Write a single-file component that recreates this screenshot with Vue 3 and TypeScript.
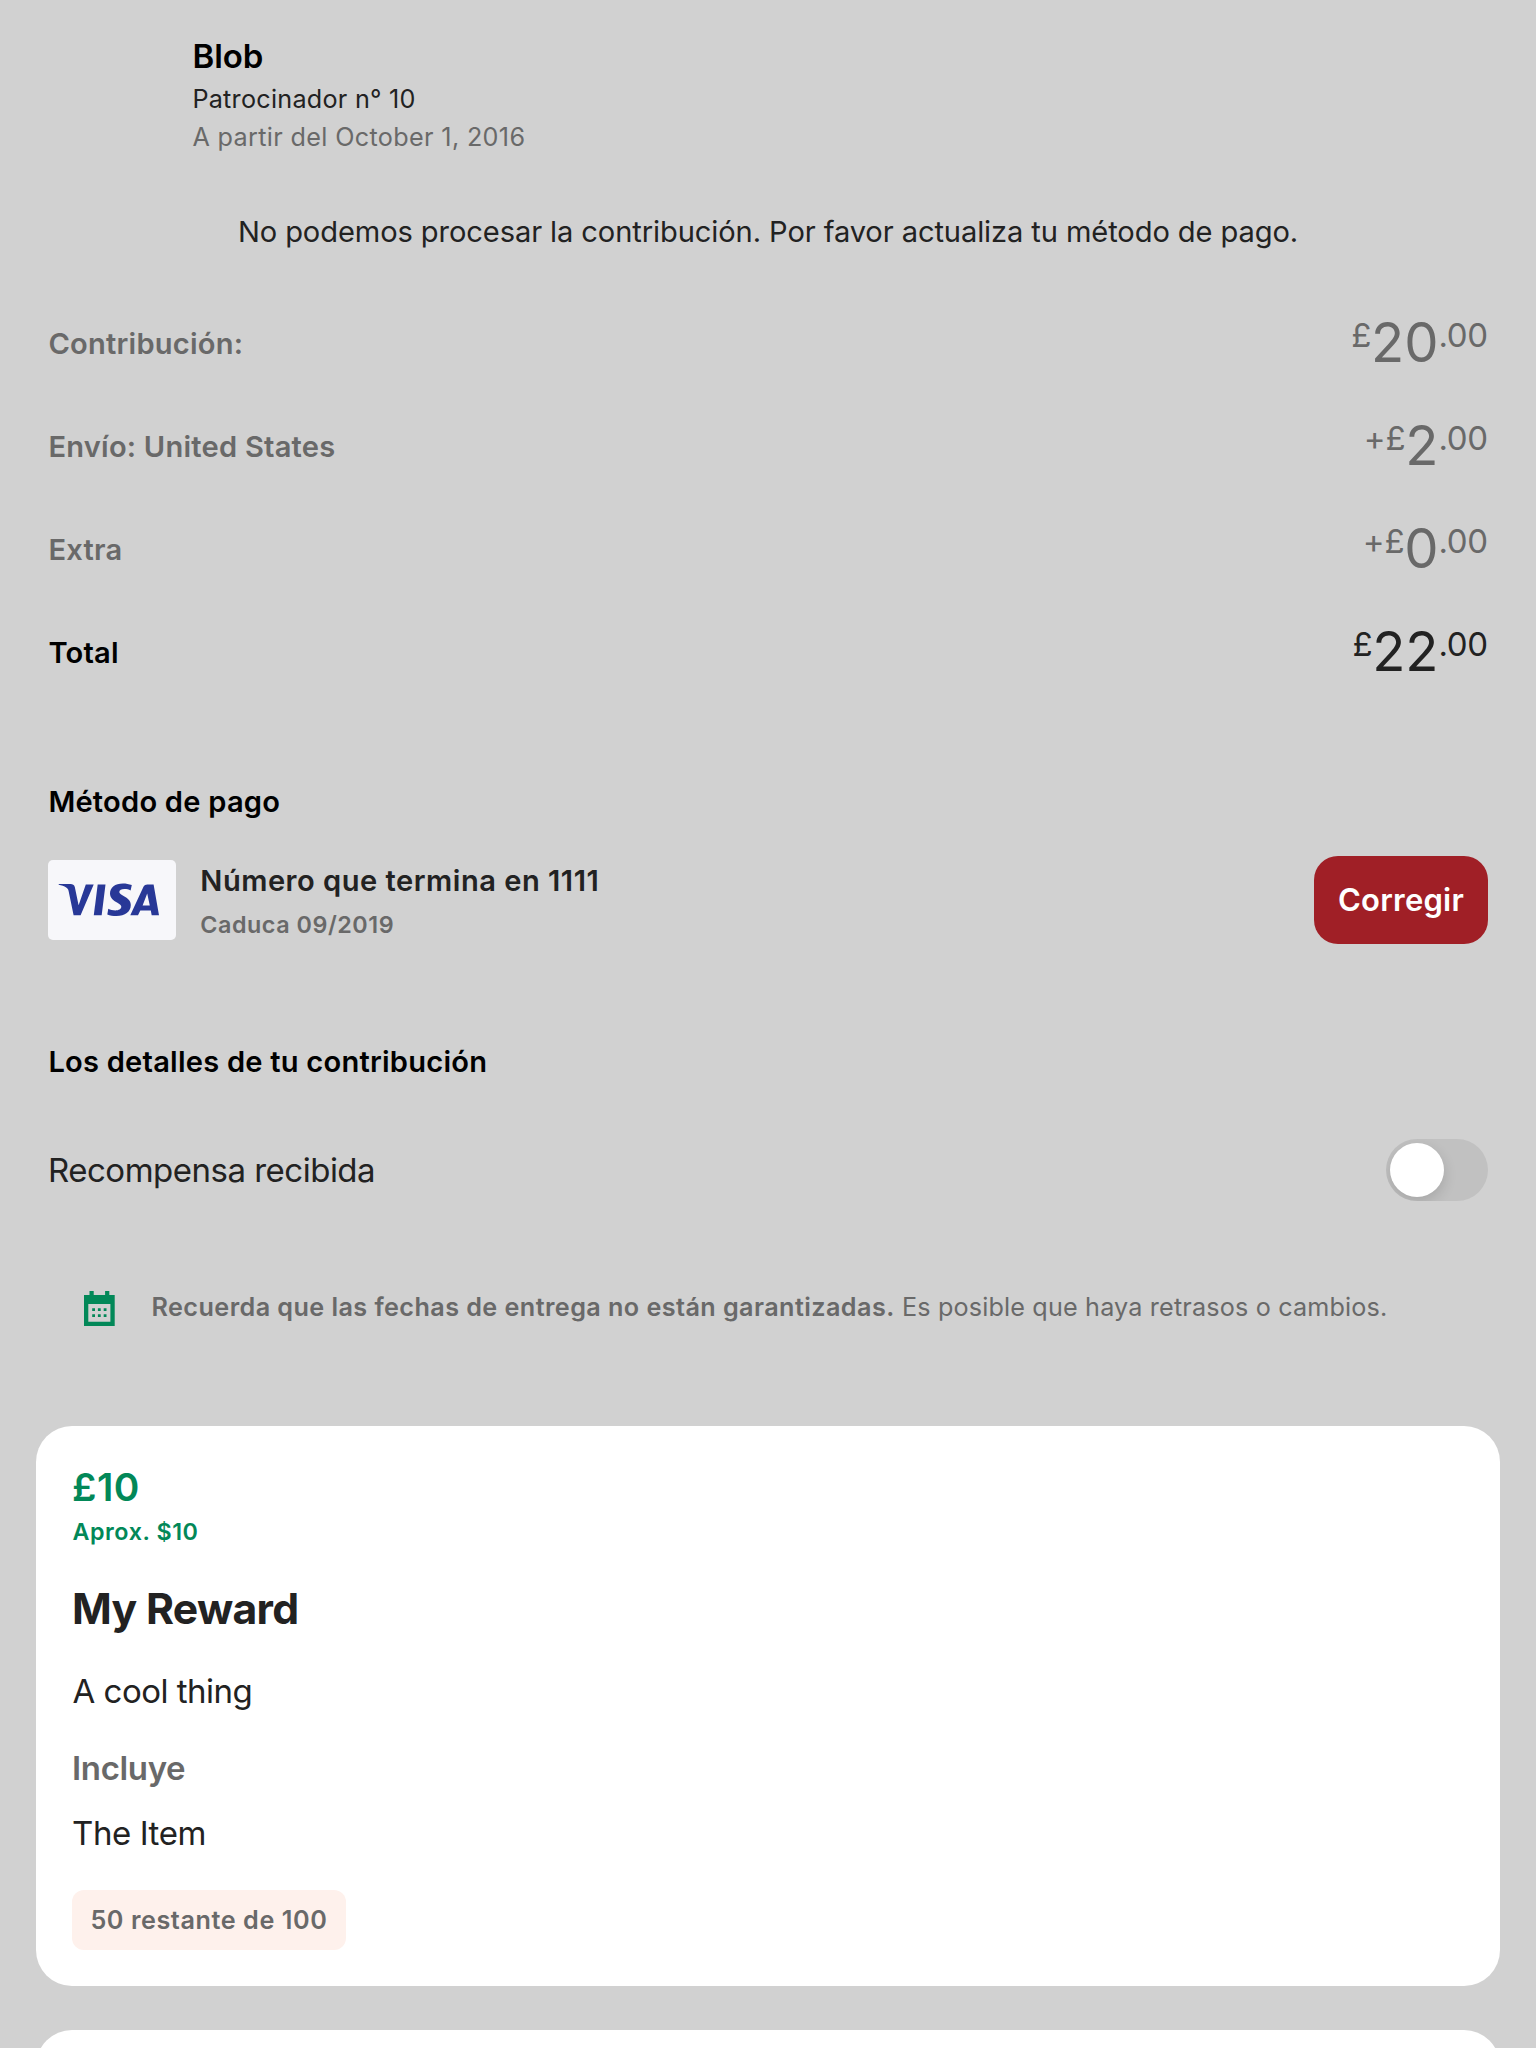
<script setup lang="ts">
import { ref } from 'vue'

interface AmountRow {
  label: string
  prefix: string
  whole: string
  cents: string
  total?: boolean
}

const amounts: AmountRow[] = [
  { label: 'Contribución:', prefix: '£', whole: '20', cents: '.00' },
  { label: 'Envío: United States', prefix: '+£', whole: '2', cents: '.00' },
  { label: 'Extra', prefix: '+£', whole: '0', cents: '.00' },
  { label: 'Total', prefix: '£', whole: '22', cents: '.00', total: true },
]

const received = ref(false)
</script>

<template>
  <main class="page">
    <header class="backer">
      <div class="name">Blob</div>
      <div class="number">Patrocinador n° 10</div>
      <div class="since">A partir del October 1, 2016</div>
    </header>

    <p class="message">No podemos procesar la contribución. Por favor actualiza tu método de pago.</p>

    <section class="amounts">
      <div v-for="row in amounts" :key="row.label" class="amount-row" :class="{ total: row.total }">
        <span class="label">{{ row.label }}</span>
        <span class="amount">
          <span class="small prefix">{{ row.prefix }}</span>
          <span class="whole">{{ row.whole }}</span>
          <span class="small cents">{{ row.cents }}</span>
        </span>
      </div>
    </section>

    <h2 class="heading method">Método de pago</h2>
    <section class="payment">
      <div class="card-logo">
        <svg viewBox="0 0 128 80" width="128" height="80" fill="#283897" aria-label="Visa">
          <path d="M10.7 24H22.6C24.6 24 26.2 24.7 26.8 27L30.6 45.2L37.8 24.4H45.7L32.6 55.3H25.6L20.6 31C20.2 29.3 19.6 28.4 18.2 27.5C16.2 26.2 13.6 25.4 10.7 24.8Z" />
          <path d="M49.7 24.4H57.5L53.7 55.3H45.8Z" />
          <path d="M83.8 25C81 23.9 78 23.4 75 23.4C67 23.4 62 27.5 62 33.5C62 38 65.5 40.5 69 42.5C72 44.2 73.3 45.2 73.3 46.8C73.3 49.3 70.5 50.4 67.5 50.4C64.5 50.4 62.5 49.8 60.3 48.8L59.3 54.5C62 55.5 65 56 68.5 56C77 56 82.8 51.8 82.8 45C82.8 40.5 79.5 38 76 36.2C73 34.6 71.3 33.6 71.3 32C71.3 30.2 73.5 29.1 76.3 29.1C78.7 29.1 80.8 29.6 82.6 30.4Z" />
          <path fill-rule="evenodd" d="M99.3 24.4H105.6L111 55.3H103.7L102.8 50.5H92.3L90 55.3H82.3L95.6 26.6C96.3 25.1 97.6 24.4 99.3 24.4ZM94.6 45.4H101.8L99.2 33.6Z" />
        </svg>
      </div>
      <div class="card-text">
        <div class="card-number">Número que termina en 1111</div>
        <div class="card-expiry">Caduca 09/2019</div>
      </div>
      <button class="fix" type="button">Corregir</button>
    </section>

    <h2 class="heading details">Los detalles de tu contribución</h2>
    <section class="received">
      <span class="received-label">Recompensa recibida</span>
      <span class="toggle" role="switch" :aria-checked="received" @click="received = !received">
        <span class="knob"></span>
      </span>
    </section>

    <section class="note">
      <svg viewBox="0 0 32 36" width="32" height="36" fill="#028858">
        <path fill-rule="evenodd" d="M5.5 0H9.7V4H21.1V0H25.3V4H30.7V35H0V4H5.5ZM4.3 13V30.8H26.4V13Z" />
        <path d="M8.2 17.2h2.8v2.8h-2.8zM13.9 17.2h2.8v2.8h-2.8zM19.7 17.2h2.8v2.8h-2.8zM8.2 23.3h2.8v2.8h-2.8zM13.9 23.3h2.8v2.8h-2.8zM19.7 23.3h2.8v2.8h-2.8z" />
      </svg>
      <p class="note-text"><strong>Recuerda que las fechas de entrega no están garantizadas.</strong> Es posible que haya retrasos o cambios.</p>
    </section>

    <article class="reward">
      <div class="price">£10</div>
      <div class="converted">Aprox. $10</div>
      <h3 class="title">My Reward</h3>
      <p class="body">A cool thing</p>
      <div class="includes">Incluye</div>
      <div class="item">The Item</div>
      <span class="pill">50 restante de 100</span>
    </article>
    <article class="reward next"></article>
  </main>
</template>

<style>
body {
  background: #d1d1d1;
}
</style>

<style scoped>
.page {
  width: 1536px;
  height: 2048px;
  overflow: hidden;
  box-sizing: border-box;
  padding-top: 36px;
  background: #d1d1d1;
  color: #222;
  font-family: Inter, "Liberation Sans", sans-serif;
}
h2,
h3,
p {
  margin: 0;
}
.backer {
  padding-left: 192.4px;
  font-size: 25.2px;
  line-height: 38px;
}
.name {
  margin-bottom: 4px;
  color: #000;
  font-size: 33px;
  font-weight: 600;
  line-height: 40px;
}
.number {
  letter-spacing: 0.25px;
}
.since {
  color: #696969;
  letter-spacing: 0.34px;
}
.message {
  margin-top: 58px;
  text-align: center;
  white-space: nowrap;
  font-size: 29.1px;
  line-height: 35px;
  letter-spacing: -0.1px;
}
.amounts {
  margin-top: 43px;
  padding: 0 48px;
}
.amount-row {
  display: flex;
  justify-content: space-between;
  align-items: flex-start;
  height: 103px;
  color: #696969;
}
.label {
  padding: 34px 0 0 0.4px;
  font-size: 29.1px;
  font-weight: 600;
  line-height: 35px;
  letter-spacing: 0.22px;
}
.amount {
  display: flex;
  align-items: flex-start;
  padding-top: 18px;
}
.small {
  margin-top: 5px;
  font-size: 33px;
  line-height: 40px;
}
.prefix {
  margin-right: -0.3px;
  letter-spacing: -0.1px;
}
.cents {
  letter-spacing: -0.4px;
  margin-right: 0.4px;
}
.whole {
  font-size: 54.4px;
  line-height: 64px;
}
.total {
  color: #222;
}
.total .label {
  color: #000;
}
.heading {
  padding-left: 48.4px;
  color: #000;
  font-size: 29.1px;
  font-weight: 600;
  line-height: 35px;
  letter-spacing: 0.22px;
}
.method {
  margin-top: 80px;
}
.payment {
  display: flex;
  align-items: flex-start;
  height: 88px;
  margin-top: 37px;
  padding: 0 48px;
}
.card-logo {
  width: 128px;
  height: 80px;
  margin-top: 4px;
  border-radius: 5px;
  background: #f7f7fa;
}
.card-logo svg {
  display: block;
}
.card-text {
  flex: 1;
  padding: 7px 0 0 24.3px;
}
.card-number {
  font-size: 29.1px;
  font-weight: 600;
  line-height: 35px;
  letter-spacing: 0.5px;
}
.card-expiry {
  margin-top: 11px;
  color: #696969;
  font-size: 23.3px;
  font-weight: 600;
  line-height: 31px;
  letter-spacing: 0.55px;
}
.fix {
  width: 174px;
  height: 88px;
  padding: 0 0 2px;
  border: 0;
  border-radius: 24px;
  background: #a01f26;
  color: #fff;
  font-family: inherit;
  font-size: 31px;
  font-weight: 600;
  letter-spacing: 0.23px;
}
.details {
  margin-top: 100px;
}
.received {
  display: flex;
  justify-content: space-between;
  align-items: center;
  margin-top: 60px;
  padding: 0 48px;
  height: 62px;
}
.received-label {
  font-size: 33px;
  line-height: 40px;
  letter-spacing: -0.5px;
}
.toggle {
  box-sizing: border-box;
  width: 102px;
  height: 62px;
  padding: 4px;
  border-radius: 31px;
  overflow: hidden;
  background: #c1c1c1;
}
.knob {
  display: block;
  width: 54px;
  height: 54px;
  border-radius: 50%;
  background: #fff;
  box-shadow: 0 5px 14px rgba(0, 0, 0, 0.14);
}
.note {
  display: flex;
  align-items: flex-start;
  height: 38px;
  margin-top: 88px;
  padding-left: 84px;
}
.note svg {
  margin-top: 2px;
}
.note-text {
  margin-left: 35.5px;
  white-space: nowrap;
  color: #696969;
  font-size: 25.2px;
  line-height: 36px;
  letter-spacing: 0.16px;
}
.note-text strong {
  font-weight: 600;
  letter-spacing: 0.43px;
}
.reward {
  box-sizing: border-box;
  height: 560px;
  margin: 99px 36px 0;
  padding: 37px 36px 0;
  border-radius: 36px;
  background: #fff;
}
.next {
  margin-top: 44px;
}
.price {
  color: #028858;
  font-size: 38.8px;
  font-weight: 600;
  line-height: 47px;
  letter-spacing: 0.5px;
}
.converted {
  margin-top: 6px;
  padding-left: 0.4px;
  color: #028858;
  font-size: 23.3px;
  font-weight: 600;
  line-height: 31px;
  letter-spacing: 0.58px;
}
.title {
  margin-top: 36px;
  font-size: 42.7px;
  font-weight: 700;
  line-height: 51px;
  letter-spacing: -0.68px;
}
.body {
  margin-top: 37px;
  padding-left: 0.5px;
  font-size: 33px;
  line-height: 40px;
  letter-spacing: -0.5px;
}
.includes {
  margin-top: 37px;
  color: #696969;
  font-size: 33px;
  font-weight: 600;
  line-height: 40px;
  letter-spacing: -0.35px;
}
.item {
  margin-top: 25px;
  font-size: 33px;
  line-height: 40px;
  letter-spacing: -0.42px;
}
.pill {
  display: block;
  box-sizing: border-box;
  width: 274px;
  height: 60px;
  margin-top: 37px;
  padding-left: 18.4px;
  border-radius: 12px;
  background: #fef1ec;
  color: #696969;
  font-size: 25.2px;
  font-weight: 600;
  line-height: 60px;
  letter-spacing: 0.58px;
}
</style>
